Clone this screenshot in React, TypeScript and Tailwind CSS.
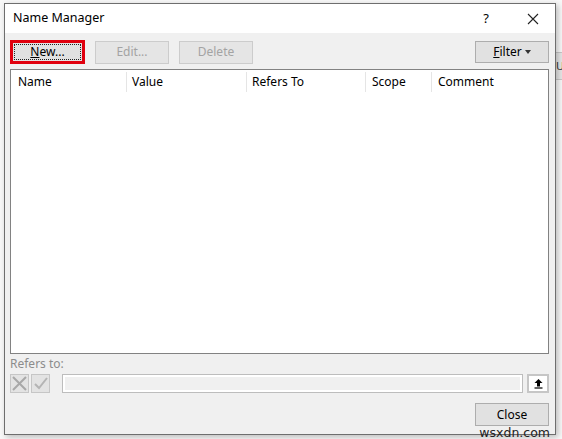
import React from 'react'

const font = { fontFamily: '"Noto Sans", "Open Sans", sans-serif' }

function DisabledButton({ label }: { label: string }) {
  return (
    <div className="w-[74px] h-[23px] flex items-center justify-center border border-[#cccccc] bg-[#e5e5e5] text-[12px] text-[#a3a3a3]">
      {label}
    </div>
  )
}

export default function App() {
  return (
    <div className="relative w-[562px] h-[439px] bg-[#f8f8f8] overflow-hidden text-[12px] text-[#1a1a1a]" style={font}>
      {/* excel sheet hint on the right */}
      <div className="absolute left-[555px] top-[52px] w-[7px] h-[28px] bg-[#e6e6e6] border-y border-[#c8c8c8] text-[11px] leading-[26px] text-[#333] pl-[1px]">U</div>

      {/* dialog */}
      <div className="absolute left-[4px] top-[3px] w-[552px] h-[432px] border border-[#6e6e6e] bg-[#f0f0f0] flex flex-col shadow-[2px_2px_6px_rgba(0,0,0,0.25)]">
        {/* title bar */}
        <div className="h-[29px] bg-white flex items-center pl-[8px] pr-[16px] shrink-0">
          <span className="text-[12.5px] text-black">Name Manager</span>
          <div className="ml-auto flex items-center gap-[38px]">
            <span className="text-[13px] text-black">?</span>
            <svg width="12" height="12" viewBox="0 0 12 12">
              <path d="M1 1 L11 11 M11 1 L1 11" stroke="#222" strokeWidth="1.1" />
            </svg>
          </div>
        </div>

        {/* body */}
        <div className="flex-1 flex flex-col pl-[5px] pr-[6px]">
          {/* button row */}
          <div className="mt-[7px] h-[24px] flex items-center gap-[10px]">
            <div className="w-[75px] h-[24px] border-[3px] border-[#e0000e] bg-[#e1e1e1] p-[1px]">
              <div className="w-full h-full border border-dotted border-[#222] flex items-center justify-center text-black">
                <span><span className="underline">N</span>ew...</span>
              </div>
            </div>
            <DisabledButton label="Edit..." />
            <DisabledButton label="Delete" />
            <div className="ml-auto w-[74px] h-[22px] border border-[#adadad] bg-[#e1e1e1] flex items-center justify-center gap-[3px] text-black">
              <span><span className="underline">F</span>ilter</span>
              <svg width="6" height="4" viewBox="0 0 6 4"><path d="M0 0 H6 L3 4 Z" fill="#333" /></svg>
            </div>
          </div>

          {/* list */}
          <div className="mt-[5px] h-[285px] border border-[#828282] bg-white flex flex-col">
            <div className="h-[24px] flex items-stretch text-black">
              <div className="w-[115px] pl-[7px] flex items-center">Name</div>
              <div className="w-px my-[2px] bg-[#e5e5e5]" />
              <div className="w-[119px] pl-[5px] flex items-center">Value</div>
              <div className="w-px my-[2px] bg-[#e5e5e5]" />
              <div className="w-[118px] pl-[5px] flex items-center">Refers To</div>
              <div className="w-px my-[2px] bg-[#e5e5e5]" />
              <div className="w-[65px] pl-[6px] flex items-center">Scope</div>
              <div className="w-px my-[2px] bg-[#e5e5e5]" />
              <div className="flex-1 pl-[6px] flex items-center">Comment</div>
            </div>
          </div>

          {/* refers to */}
          <div className="mt-[3px] h-[14px] leading-[14px] text-[#8c8c8c]">Refers to:</div>
          <div className="mt-[3px] h-[19px] flex items-center">
            <div className="w-[19px] h-[19px] border border-[#c6c6c6] bg-[#e3e3e3] flex items-center justify-center">
              <svg width="15" height="15" viewBox="0 0 15 15">
                <path d="M1 1 L14 14 M14 1 L1 14" stroke="#a8a8a8" strokeWidth="2" />
              </svg>
            </div>
            <div className="ml-[2px] w-[19px] h-[19px] border border-[#c6c6c6] bg-[#e3e3e3] flex items-center justify-center">
              <svg width="15" height="15" viewBox="0 0 15 15">
                <path d="M2 8 L6 12 L14 2" stroke="#b4b4b4" strokeWidth="2" fill="none" />
              </svg>
            </div>
            <div className="ml-[12px] flex-1 h-[19px] border border-[#bdbdbd] bg-white p-[2px] flex">
              <div className="flex-1 bg-[#f0f0f0]" />
            </div>
            <div className="ml-[4px] w-[22px] h-[19px] border-2 border-[#c6c6c6] bg-white flex items-center justify-center">
              <svg width="11" height="11" viewBox="0 0 11 11">
                <path d="M5.5 1 L9.5 5 H7 V8.5 H4 V5 H1.5 Z" fill="#000" />
                <path d="M1.5 10 H9.5" stroke="#000" strokeWidth="1.2" />
              </svg>
            </div>
          </div>

          {/* close */}
          <div className="mt-[10px] flex justify-end">
            <div className="w-[74px] h-[23px] border border-[#adadad] bg-[#e1e1e1] flex items-center justify-center text-black">
              Close
            </div>
          </div>
        </div>
      </div>

      <div className="absolute right-[12px] top-[426px] text-[12.5px] leading-[13px] text-[#222]" style={{ fontFamily: '"DejaVu Sans", sans-serif' }}>
        wsxdn.com
      </div>
    </div>
  )
}
